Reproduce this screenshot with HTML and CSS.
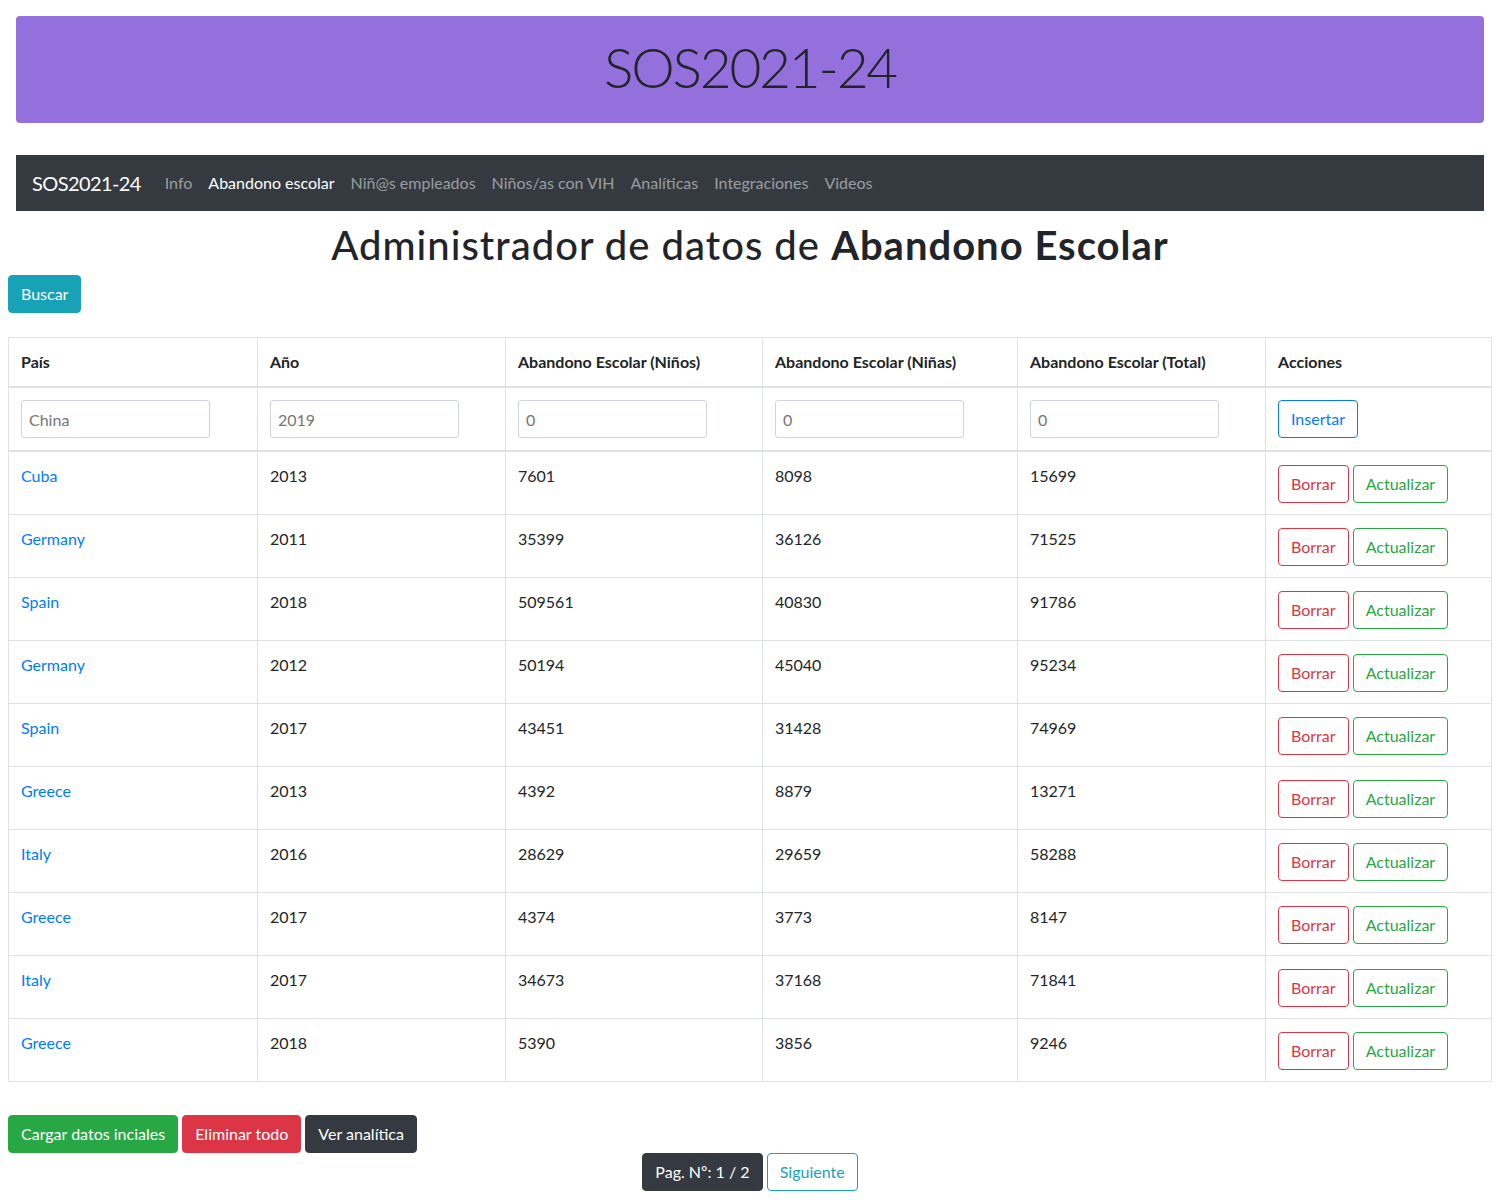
FILE: index.html
```html
<!DOCTYPE html>
<html lang="es">
<head>
<meta charset="utf-8">
<title>SOS2021-24</title>
<link rel="stylesheet" href="styles.css">
</head>
<body>
<div class="jumbotron"><h1 class="display">SOS2021-24</h1></div>
<nav class="navbar">
  <a class="brand" href="#">SOS2021-24</a>
  <a class="nav-link" href="#">Info</a>
  <a class="nav-link active" href="#">Abandono escolar</a>
  <a class="nav-link" href="#">Niñ@s empleados</a>
  <a class="nav-link" href="#">Niños/as con VIH</a>
  <a class="nav-link" href="#">Analíticas</a>
  <a class="nav-link" href="#">Integraciones</a>
  <a class="nav-link" href="#">Videos</a>
</nav>
<main>
  <h1 class="page-title">Administrador de datos de <strong>Abandono Escolar</strong></h1>
  <div class="search-row"><button class="btn btn-info">Buscar</button></div>
  <table class="table">
    <colgroup>
      <col class="c1"><col class="c2"><col class="c3"><col class="c4"><col class="c5"><col class="c6">
    </colgroup>
    <thead>
      <tr><th>País</th><th>Año</th><th>Abandono Escolar (Niños)</th><th>Abandono Escolar (Niñas)</th><th>Abandono Escolar (Total)</th><th>Acciones</th></tr>
    </thead>
    <tbody class="insert-body">
      <tr>
        <td><input class="form-input" placeholder="China"></td>
        <td><input class="form-input" placeholder="2019"></td>
        <td><input class="form-input" placeholder="0"></td>
        <td><input class="form-input" placeholder="0"></td>
        <td><input class="form-input" placeholder="0"></td>
        <td><button class="btn btn-outline-primary">Insertar</button></td>
      </tr>
    </tbody>
    <tbody>
      <tr><td><a href="#">Cuba</a></td><td>2013</td><td>7601</td><td>8098</td><td>15699</td><td class="actions"><button class="btn btn-outline-danger">Borrar</button> <button class="btn btn-outline-success">Actualizar</button></td></tr>
      <tr><td><a href="#">Germany</a></td><td>2011</td><td>35399</td><td>36126</td><td>71525</td><td class="actions"><button class="btn btn-outline-danger">Borrar</button> <button class="btn btn-outline-success">Actualizar</button></td></tr>
      <tr><td><a href="#">Spain</a></td><td>2018</td><td>509561</td><td>40830</td><td>91786</td><td class="actions"><button class="btn btn-outline-danger">Borrar</button> <button class="btn btn-outline-success">Actualizar</button></td></tr>
      <tr><td><a href="#">Germany</a></td><td>2012</td><td>50194</td><td>45040</td><td>95234</td><td class="actions"><button class="btn btn-outline-danger">Borrar</button> <button class="btn btn-outline-success">Actualizar</button></td></tr>
      <tr><td><a href="#">Spain</a></td><td>2017</td><td>43451</td><td>31428</td><td>74969</td><td class="actions"><button class="btn btn-outline-danger">Borrar</button> <button class="btn btn-outline-success">Actualizar</button></td></tr>
      <tr><td><a href="#">Greece</a></td><td>2013</td><td>4392</td><td>8879</td><td>13271</td><td class="actions"><button class="btn btn-outline-danger">Borrar</button> <button class="btn btn-outline-success">Actualizar</button></td></tr>
      <tr><td><a href="#">Italy</a></td><td>2016</td><td>28629</td><td>29659</td><td>58288</td><td class="actions"><button class="btn btn-outline-danger">Borrar</button> <button class="btn btn-outline-success">Actualizar</button></td></tr>
      <tr><td><a href="#">Greece</a></td><td>2017</td><td>4374</td><td>3773</td><td>8147</td><td class="actions"><button class="btn btn-outline-danger">Borrar</button> <button class="btn btn-outline-success">Actualizar</button></td></tr>
      <tr><td><a href="#">Italy</a></td><td>2017</td><td>34673</td><td>37168</td><td>71841</td><td class="actions"><button class="btn btn-outline-danger">Borrar</button> <button class="btn btn-outline-success">Actualizar</button></td></tr>
      <tr><td><a href="#">Greece</a></td><td>2018</td><td>5390</td><td>3856</td><td>9246</td><td class="actions"><button class="btn btn-outline-danger">Borrar</button> <button class="btn btn-outline-success">Actualizar</button></td></tr>
    </tbody>
  </table>
  <div class="bottom-actions">
    <button class="btn btn-success">Cargar datos inciales</button>
    <button class="btn btn-danger">Eliminar todo</button>
    <button class="btn btn-dark">Ver analítica</button>
  </div>
  <div class="pager">
    <button class="btn btn-dark">Pag. Nº: 1 / 2</button>
    <button class="btn btn-outline-info">Siguiente</button>
  </div>
</main>
</body>
</html>
```
FILE: styles.css
```css
* { box-sizing: border-box; }
body {
  margin: 8px;
  font-family: Lato, "Open Sans", "Liberation Sans", sans-serif;
  font-size: 16px;
  line-height: 1.5;
  color: #212529;
  background: #fff;
}
a { color: #007bff; text-decoration: none; }

.jumbotron {
  margin: 8px 8px 0;
  background: #9370db;
  border-radius: 4px;
  padding: 18px 16px 22px;
  text-align: center;
}
.display {
  margin: 0;
  font-size: 55px;
  font-weight: 300;
  line-height: 67px;
  letter-spacing: -2.2px;
  color: #212529;
}

.navbar {
  margin: 32px 8px 0;
  background: #343a40;
  padding: 8px 16px;
  display: flex;
  align-items: center;
  height: 56px;
}
.brand {
  color: #fff;
  font-size: 20px;
  line-height: 30px;
  letter-spacing: -0.6px;
  margin-right: 16px;
}
.nav-link {
  color: rgba(255,255,255,.5);
  padding: 8px;
  line-height: 24px;
}
.nav-link.active { color: #fff; }
.nav-link.wide { letter-spacing: 0.3px; }

.page-title {
  margin: 10px 0 6px;
  font-size: 40px;
  line-height: 48px;
  font-weight: 500;
  letter-spacing: 1px;
  text-align: center;
}
.page-title strong { font-weight: 700; }

.search-row { margin-bottom: 24px; }

.btn {
  display: inline-block;
  font-family: inherit;
  font-size: 16px;
  line-height: 24px;
  padding: 6px 12px;
  border: 1px solid transparent;
  border-radius: 4px;
  background: transparent;
  cursor: pointer;
  vertical-align: middle;
}
.btn-info { background: #17a2b8; border-color: #17a2b8; color: #fff; }
.btn-success { background: #28a745; border-color: #28a745; color: #fff; }
.btn-danger { background: #dc3545; border-color: #dc3545; color: #fff; }
.btn-dark { background: #343a40; border-color: #343a40; color: #fff; }
.btn-outline-primary { color: #007bff; border-color: #007bff; }
.btn-outline-danger { color: #dc3545; border-color: #dc3545; }
.btn-outline-success { color: #28a745; border-color: #28a745; }
.btn-outline-info { color: #17a2b8; border-color: #17a2b8; }

.table {
  width: 1484px;
  border-collapse: collapse;
  margin-bottom: 33px;
  table-layout: fixed;
}
.c1 { width: 249px; }
.c2 { width: 248px; }
.c3 { width: 257px; }
.c4 { width: 255px; }
.c5 { width: 248px; }
.c6 { width: 226px; }
.table th, .table td {
  border: 1px solid #dee2e6;
  padding: 12px;
  text-align: left;
  vertical-align: top;
}
.table thead th {
  border-bottom: 2px solid #dee2e6;
  font-weight: 700;
}
.insert-body td { border-bottom: 2px solid #dee2e6; }
.table td.actions { padding-bottom: 11px; }
.actions .btn { margin-top: 1px; }

.form-input {
  width: 189px;
  height: 38px;
  padding: 6px 7px;
  font-family: inherit;
  font-size: 16px;
  border: 1px solid #ced4da;
  border-radius: 3px;
  color: #495057;
}
.form-input::placeholder { color: #757575; }

.pager { text-align: center; }
```
